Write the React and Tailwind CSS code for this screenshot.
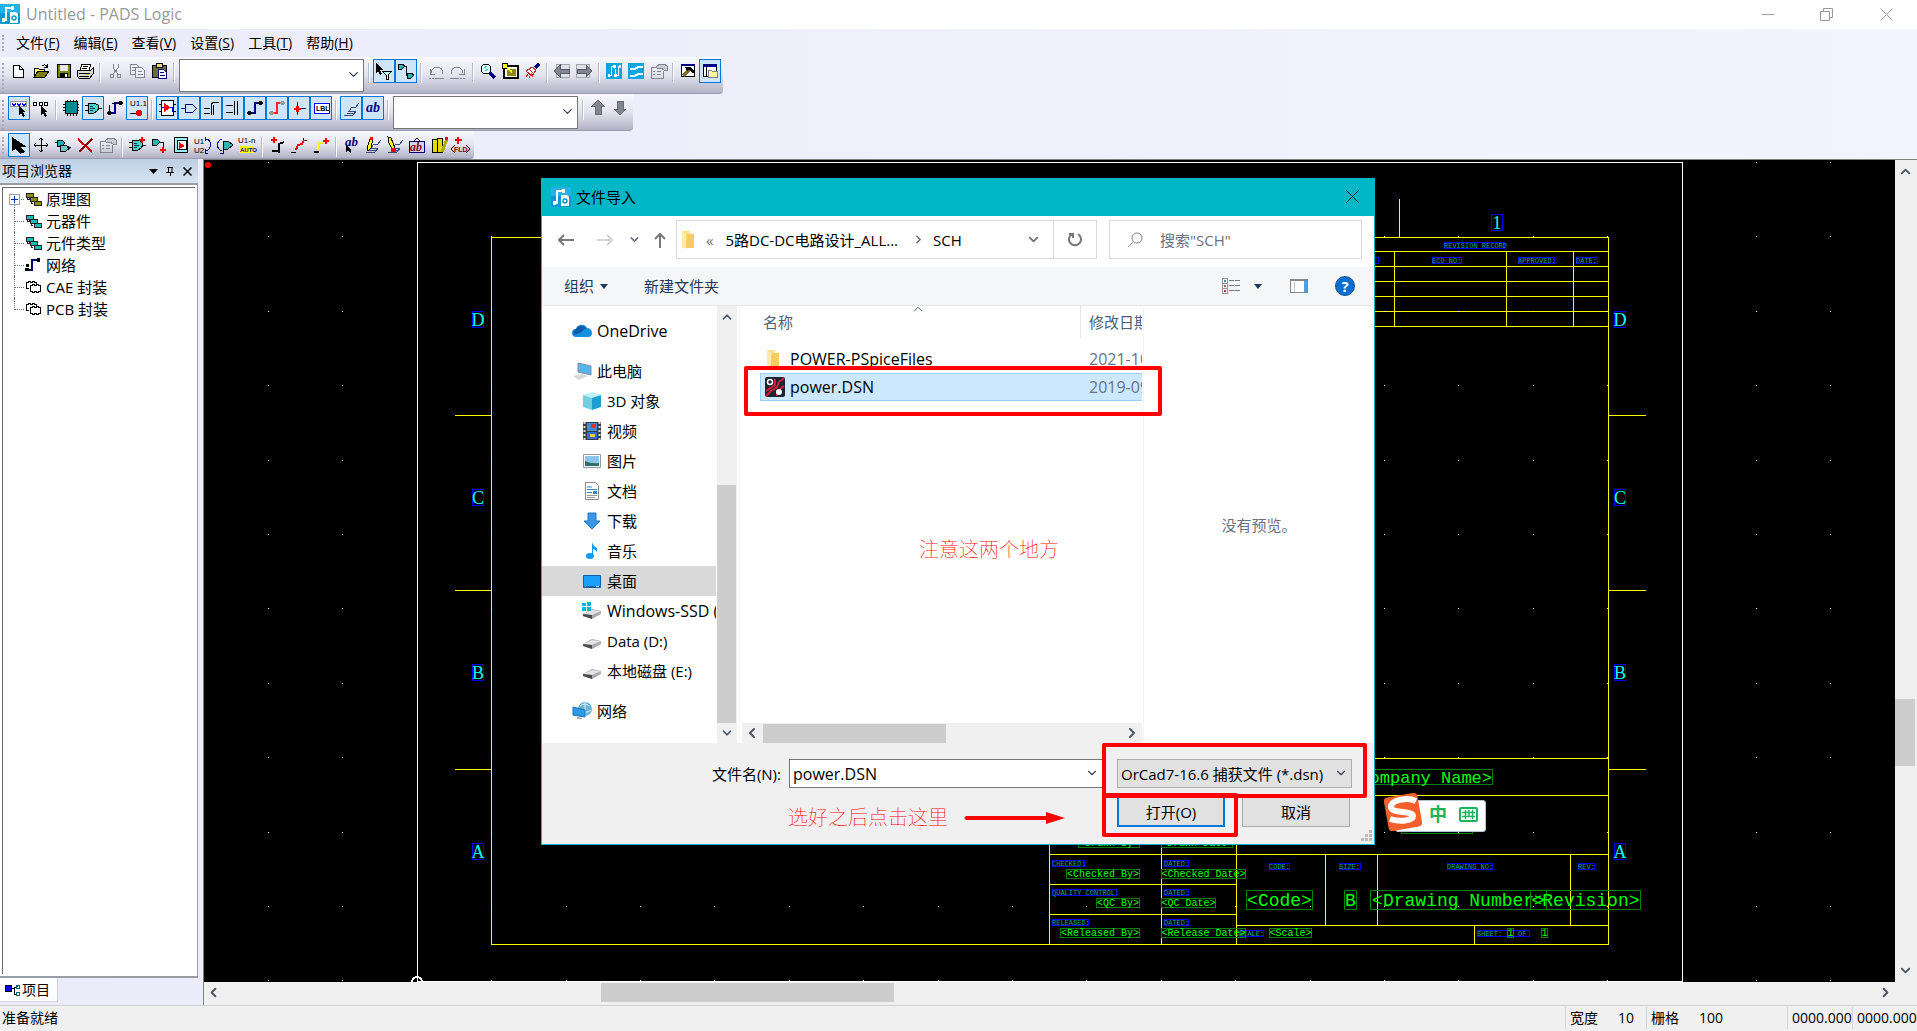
import { ChevronDown, ChevronUp, ChevronLeft, ChevronRight } from "lucide-react";

const K = "#000";
const N = "#000080";
const G = "#808590";

/* ---------- toolbar glyphs, drawn on a 22x24 button ---------- */

const gate = (
  <>
    <path d="M3 9h4M3 14h4M17 12h3" stroke={K} />
    <path d="M6 7h6l4 2 1 3-2 3-3 2H6z" fill="#4fd0d0" stroke={K} />
    <path d="M8 10h3M8 12h5M8 14h3" stroke="#003c3c" />
  </>
);
const cursor = <path d="M11 10v9l2-2 2 4 2-1-2-4h3z" fill={K} />;
const part = (
  <>
    <path d="M5.500 4.500h12v15h-12z" fill="#fff" stroke={K} />
    <path d="M3 8.500h3M3 15.500h3M17 8.500h3M17 15.500h3" stroke={K} />
    <path d="M8 7l7 4.500L8 16z" fill="#f00" />
    <path d="M6 11.500h2M14 11.500h2v4h1" stroke="#00f" />
  </>
);
const plus = (x, y) => <path d={`M${x} ${y - 3}v6M${x - 3} ${y}h6`} stroke="#f00" strokeWidth="2" />;
const net = (c, d) => (
  <>
    <path d="M7 17h4V7h5" stroke={c} strokeWidth="2" />
    <path d="M4 15h3v1h1v2H7v1H4v-1H3v-2h1zM15 5h3v1h1v2h-1v1h-3V8h-1V6h1z" fill={d} />
  </>
);
const props = (
  <>
    <path d="M4 8h9M4 8v11h12v-7" stroke={G} />
    <path d="M6 12h2M10 12h4M6 15h2M10 15h4" stroke={G} />
    <path d="M9 8l4-3h4l3 2v4h-3l-3-2h-4z" fill="#c9ccd4" stroke={G} />
  </>
);
const pencil = <path d="M6 18l-1-3 3-9h3l-2 9z" fill="#ff0" stroke={K} />;
const lines2d = <path d="M4 19h9l3-4H9l3-4h4l3-4M7 17h7" stroke="#39497f" />;

const GLYPHS = {
  new: <path d="M5.500 6.500h6l4 4v8h-10zM11.500 6.500v4h4" fill="#fff" stroke={K} />,
  open: (
    <>
      <path d="M4 18V9h4l1 1h5v3" fill="#ffff9c" stroke={K} />
      <path d="M4 18l4-6h11l-4 6z" fill="#808000" stroke={K} />
      <path d="M12 7c2-2 4-1 5 1M17 5v3h-3" stroke={K} />
    </>
  ),
  save: (
    <>
      <path d="M5.500 5.500h13v13h-13z" fill="#808000" stroke={K} />
      <path d="M8 6h8v6H8z" fill="#e8e8e8" />
      <path d="M8 14h8v5H8z" fill={K} />
      <path d="M13 15h2v3h-2z" fill="#fff" />
    </>
  ),
  print: (
    <>
      <path d="M8 5h9l-2 6H6z" fill="#fff" stroke={K} />
      <path d="M3 11h14l2-2v6l-3 4H5l-2-2z" fill="#d8d8d8" stroke={K} />
      <path d="M9 7h5M8 9h5M5 14h11M5 17h10" stroke={K} />
      <path d="M12 15h3" stroke="#cc0" />
    </>
  ),
  cut: (
    <>
      <path d="M9 5v4l5 6M14 5v4l-5 6" stroke={G} />
      <circle cx="8" cy="17" r="2" stroke={G} />
      <circle cx="15" cy="17" r="2" stroke={G} />
    </>
  ),
  copy: (
    <>
      <path d="M4.500 5.500h6l2 2v8h-8z" fill="#eef" stroke={G} />
      <path d="M9.500 8.500h6l3 3v7h-9z" fill="#eef" stroke={G} />
      <path d="M6 8.500h3M6 11.500h3M12 12.500h4M12 15.500h5" stroke={G} />
    </>
  ),
  paste: (
    <>
      <path d="M4 6h14v12H4z" fill="#6b6b35" stroke={K} />
      <path d="M8 4h6v4H8z" fill="#e8e060" stroke={K} />
      <path d="M10.500 10.500h5l3 3v6h-8z" fill="#fff" stroke={N} />
      <path d="M12 13.500h4M12 16.500h5" stroke={N} />
    </>
  ),
  filter: (
    <>
      <path d="M3 4v10l2-2 2 4 2-1-2-4h3z" fill={K} />
      <path d="M9 12h10l-4 4v4h-2v-4z" fill="#bff" stroke={K} />
    </>
  ),
  trace: (
    <>
      <path d="M3 5h4l3 2-3 3H3zM12 14h4l3 2-3 3h-4z" fill="#2cb5b5" stroke={K} />
      <path d="M10 7h1v9h1" stroke={K} />
    </>
  ),
  undo: <path d="M4 19h2M7 19h2M10 19h9M5 10v5h5M6 14c1-8 12-8 12 1" stroke={G} />,
  redo: <path d="M3 19h9M13 19h2M16 19h2M17 10v5h-5M16 14C15 6 4 6 4 15" stroke={G} />,
  zoom: (
    <>
      <circle cx="9" cy="10" r="5" fill="#e6ffff" stroke={K} />
      <path d="M7 9l3-2M8 12l3-2" stroke="#3cc" />
      <path d="M13 14l5 5" stroke={N} strokeWidth="3" />
    </>
  ),
  board: (
    <>
      <path d="M5 7h14v12H5z" fill="#fff" stroke={K} strokeWidth="2" />
      <path d="M8 10h9v7H8z" fill="#8a8a00" />
      <circle cx="6" cy="7" r="3" fill="#ff0" stroke={K} />
      <path d="M8 9l5 4" stroke="#ff0" strokeWidth="2" />
    </>
  ),
  brush: (
    <>
      <path d="M14 9l4-4" stroke={N} strokeWidth="3" />
      <path d="M5 12l6-4 4 3-4 6z" fill="#fff" stroke="#a33" />
      <path d="M5 18l2-3M8 19l3-5M11 18l2-4M8 10l5 5" stroke="#f22" />
    </>
  ),
  back: (
    <>
      <path d="M5.500 5.500h13v13h-13z" fill="#dfe1e8" stroke="#a0a4b0" />
      <path d="M3 12l6-6v4h9v4H9v4z" fill={G} stroke="#555a66" />
    </>
  ),
  forward: (
    <>
      <path d="M3.500 5.500h13v13h-13z" fill="#dfe1e8" stroke="#a0a4b0" />
      <path d="M19 12l-6-6v4H4v4h9v4z" fill={G} stroke="#555a66" />
    </>
  ),
  layout: (
    <>
      <path d="M3 4h16v16H3z" fill="#0fa5dd" />
      <path d="M5 16.500h3.500v-9H11M12.500 18V9.500M12 16.500h3.500v-9H17" stroke="#fff" />
      <path d="M10 6h3v3h-3zM16 6h2v3h-2zM5 15h2v3H5zM11 15h3v3h-3z" fill="#fff" />
    </>
  ),
  router: (
    <>
      <path d="M3 4h16v16H3z" fill="#0fa5dd" />
      <path d="M5 10h5l3-2h5M5 17h5l3-2h5" stroke="#fff" strokeWidth="2" />
    </>
  ),
  props,
  hammer: (
    <>
      <path d="M4.500 6.500h13v11h-13z" fill="#fff" stroke={K} />
      <path d="M4 5h14v2H4z" fill={N} />
      <path d="M6 17l7-7" stroke="#7a6a30" strokeWidth="3" />
      <path d="M8 8h6l4 5-2 1-4-3-2 1z" fill={K} />
    </>
  ),
  explorer: (
    <>
      <path d="M4.500 6.500h13v11h-13z" fill="#fff" stroke={K} />
      <path d="M4 5h14v3H4z" fill={N} />
      <path d="M7.500 8v10" stroke={K} />
      <path d="M9.500 11.500h3l1 1h5v6h-9z" fill="#fff7a0" stroke={G} />
    </>
  ),
  selectAny: (
    <>
      <path d="M2.500 5.500h16v5h-16z" fill="#fff" stroke="#999" />
      <path d="M4 7l2 3 2-3M9 7l2 3 2-3M14 7l2 3 2-3" stroke="#00f" />
      {cursor}
    </>
  ),
  selectGates: (
    <>
      <path d="M3.500 6.500h3v3h-3zM9.500 6.500h3v3h-3zM14.500 6.500h3v3h-3z" fill="#fff" stroke={K} />
      {cursor}
    </>
  ),
  chip: (
    <>
      <path d="M7.500 4v16M10.500 4v16M13.500 4v16M16.500 4v16M3 8.500h16M3 11.500h16M3 14.500h16" stroke={K} />
      <path d="M5.500 5.500h12v12h-12z" fill="#008c8c" stroke={K} />
    </>
  ),
  gate,
  net: (
    <>
      {net(N, K)}
      <path d="M5.500 9v6M8 7h3" stroke={K} />
    </>
  ),
  pin: (
    <>
      <text x="4" y="10" fontSize="8" fill={K}>U1.1</text>
      <path d="M4 17.500h6" stroke={K} />
      <circle cx="13" cy="17" r="3" fill="#e00" />
    </>
  ),
  part,
  offpage: <path d="M3 12.500h4M7.500 8.500h7l4 4-4 4h-7z" stroke={N} />,
  bus: <path d="M4 12h6M4 17h6M11 19V8l3-2h5M13 19V9" stroke={K} />,
  buspin: <path d="M4 9.500h7M4 16.500h7M12.500 5v14M15.500 5v14" stroke={K} />,
  conn: net(N, K),
  segment: net("#f22", "#999"),
  junction: (
    <>
      <path d="M9.500 6v13M11 12.500h7" stroke={N} />
      <path d="M6 12h7v2H6zM8 10h3v6H8z" fill="#f00" />
    </>
  ),
  label: (
    <>
      <path d="M4 7h15v10H4z" fill="#fff" stroke="#00f" />
      <text x="6" y="15" fontSize="7" fontWeight="bold" fill={K}>LBL</text>
    </>
  ),
  lines: lines2d,
  text: (
    <text x="4" y="16" fontSize="14" fontStyle="italic" fontWeight="bold" fontFamily="Liberation Serif" fill={N}>ab</text>
  ),
  up: <path d="M11 4l6 6h-3v8H8v-8H5z" fill={G} stroke="#666b78" />,
  down: <path d="M11 19l6-6h-3V5H8v8H5z" fill={G} stroke="#666b78" />,
  arrow: <path d="M4 4v14l4-2 4 5 5-2-4-5h6z" fill={K} />,
  move: (
    <path d="M11 6v13M4 12h14M9 7l2-2 2 2M9 17l2 2 2-2M6 10l-2 2 2 2M16 10l2 2-2 2" stroke={K} />
  ),
  gate2: (
    <>
      <path d="M5 7h5l3 3-3 3H5z" fill="#2ab" stroke={K} />
      <path d="M8 12h6l4 3-4 3H8z" fill="#6cc" stroke={K} />
      <path d="M3 9h2M15 14h4" stroke={K} />
    </>
  ),
  del: (
    <>
      <path d="M4 6l14 13" stroke="#c00" strokeWidth="2" />
      <path d="M18 6L5 19" stroke="#800" strokeWidth="2" />
    </>
  ),
  addGate: <>{gate}{plus(16, 7)}</>,
  addConn: (
    <>
      <path d="M4 6h5l3 3-3 3H4z" fill="#2cb5b5" stroke={K} />
      <path d="M11 9h4v6" stroke={K} />
      {plus(15, 17)}
    </>
  ),
  addSheet: (
    <>
      <path d="M4.500 4.500h13v15h-13z" fill="#9ee" stroke={K} />
      <path d="M7.500 7.500h9v9h-9z" fill="#fff" stroke={K} />
      <path d="M9 9l6 4-6 3z" fill="#f00" />
    </>
  ),
  swapRef: (
    <>
      <text x="2" y="11" fontSize="8" fill={K}>U1</text>
      <text x="2" y="20" fontSize="8" fill={K}>U2</text>
      <path d="M14 6c6 1 6 10 0 12M13 4v4M13 16v4h3" stroke={N} />
    </>
  ),
  swapPin: (
    <>
      <path d="M8 6c-6 2-6 10 0 12M9 17v3H6" stroke={N} />
      <path d="M9 8h5l5 4-5 4H9z" fill="#2cb5b5" stroke={K} />
    </>
  ),
  auto: (
    <>
      <text x="2" y="10" fontSize="8" fill={K}>U1-n</text>
      <path d="M3 13h15v7H3z" fill="#ff0" />
      <text x="4" y="19" fontSize="6" fontWeight="bold" fill="#00a">AUTO</text>
    </>
  ),
  addBus: <><path d="M6 18h6M13 20v-9l5-2" stroke={K} strokeWidth="2" />{plus(8, 7)}</>,
  splitBus: (
    <>
      <path d="M3 19h5M15 7h4M15 5v5" stroke={K} />
      <path d="M8 17l2-5 4-1 2-4" stroke="#f00" strokeWidth="2" />
    </>
  ),
  extendBus: (
    <>
      <path d="M4 19h5" stroke={K} strokeWidth="2" />
      <path d="M8 17v-7h6" stroke="#ff0" strokeWidth="2" />
      {plus(16, 8)}
    </>
  ),
  addText: (
    <>
      <text x="5" y="13" fontSize="13" fontStyle="italic" fontWeight="bold" fontFamily="Liberation Serif" fill={N}>ab</text>
      <path d="M6 12v7l2-2 3 4v-5z" fill={K} />
    </>
  ),
  draw: <>{lines2d}{pencil}<path d="M8 4h3v3H8z" fill="#f00" /></>,
  drawMod: (
    <>
      {lines2d}
      <path d="M4 4l3 1 4 10-3 1-3-6z" fill="#ff0" stroke={K} />
      <path d="M7 15h5v4H7z" fill="#e00" />
    </>
  ),
  library: (
    <>
      <path d="M3.500 8.500h15v11h-15z" fill="#cfd6f5" stroke={N} />
      <path d="M7 9l4-4 4 4" stroke={K} />
      <text x="4" y="18" fontSize="12" fontStyle="italic" fontWeight="bold" fontFamily="Liberation Serif" fill="#900">ab</text>
    </>
  ),
  books: (
    <>
      <path d="M4 6h5v13H4zM9 5h5v14H9z" fill="#dd0" stroke={K} />
      <path d="M19 6l-5 13" stroke="#aa0" strokeWidth="3" />
      <path d="M17 4h3v3h-3z" fill="#f00" />
    </>
  ),
  field: (
    <>
      <path d="M8 4v7M5 7h7" stroke="#f00" strokeWidth="2" />
      <path d="M5 12l-4 4 4 4M16 12l4 4-4 4" stroke={K} />
      <text x="4" y="19" fontSize="7" fontWeight="bold" fill="#900">FLD</text>
    </>
  ),
};

function Tool({ name, active }) {
  return (
    <button
      aria-label={name}
      className={`h-6 w-[22px] shrink-0 ${active ? "bg-[#cfe5f7] outline outline-1 -outline-offset-1 outline-[#0078d7]" : ""}`}
    >
      <svg width="22" height="24" viewBox="0 0 22 24" fill="none" shapeRendering="crispEdges" fontFamily="Liberation Sans" aria-hidden="true">
        {GLYPHS[name]}
      </svg>
    </button>
  );
}

function Sep() {
  return <div className="mx-[3px] mt-1 h-5 w-0.5 shrink-0 border-l border-[#b9bac8] bg-white" />;
}

function Combo({ label }) {
  return (
    <div className="relative mx-px">
      <select aria-label={label} className="block h-[33px] w-[185px] appearance-none border border-[#777] bg-white" />
      <ChevronDown size={15} strokeWidth={2} className="absolute right-[3px] top-2 text-gray-700" />
    </div>
  );
}

function Grip() {
  return <div className="mr-1 mt-1 w-1 self-stretch border-r-2 border-dotted border-[#a9abb8]" />;
}

/* "*" marks a pressed button, "|" a separator, "combo" a drop-down */
function Toolbar({ items, label, className }) {
  return (
    <div role="toolbar" aria-label={label}
      className={`flex w-max items-start rounded-br-[4px] border-b border-[#9c9cb0] bg-linear-to-b from-[#f8f8fd] via-[#e3e4ee] to-[#b2b2c6] pr-0.5 pt-0.5 ${className}`}>
      <Grip />
      {items.split(" ").map((item, i) => {
        if (item === "|") return <Sep key={i} />;
        if (item === "combo") return <Combo key={i} label={label} />;
        return <Tool key={i} name={item.replace("*", "")} active={item.endsWith("*")} />;
      })}
    </div>
  );
}

const ROW1 = "new open save print | cut copy paste | combo | filter* trace* | undo redo | zoom board brush | back forward | layout router props | hammer explorer*";
const ROW2 = "selectAny* selectGates | chip gate* net pin* | part* offpage* bus* buspin* conn* segment* junction* label* | lines* text* | combo | up down";
const ROW3 = "arrow* move gate2 del props | addGate addConn addSheet swapRef swapPin auto | addBus splitBus extendBus | addText draw drawMod library books field";

function AppLogo() {
  return (
    <svg width="20" height="20" viewBox="0 0 20 20" fill="none" aria-hidden="true" className="shrink-0">
      <rect width="20" height="20" rx="1" fill="#0d9ad0" />
      <rect width="20" height="9" rx="1" fill="#22b2e6" />
      <path d="M3 16h3V4h5" stroke="#fff" strokeWidth="2" />
      <path d="M2 14h3v4H2zM11 2h3v4h-3z" fill="#fff" />
      <path d="M10 8h6l2 2v9h-8z" fill="#fff" />
      <circle cx="14" cy="14" r="2" stroke="#0d9ad0" strokeWidth="1.5" />
    </svg>
  );
}

function TitleBar() {
  return (
    <header className="flex h-[29px] shrink-0 items-center bg-white pb-px text-[#999]">
      <AppLogo />
      <h1 className="ml-1.5 flex-1 text-base">Untitled - PADS Logic</h1>
      <div className="flex">
        <button aria-label="最小化" className="flex w-[58px] justify-center">
          <svg width="12" height="12" stroke="currentColor"><path d="M0 6.5h12" /></svg>
        </button>
        <button aria-label="还原" className="flex w-[58px] justify-center">
          <svg width="13" height="13" fill="none" stroke="currentColor"><path d="M.5 3.5h9v9h-9zM3.500 3V.5h9v9H10" /></svg>
        </button>
        <button aria-label="关闭" className="flex w-[62px] justify-center">
          <svg width="13" height="13" stroke="currentColor"><path d="M.5.5l12 12M12.500.5l-12 12" /></svg>
        </button>
      </div>
    </header>
  );
}

const MENUS = [["文件", "F"], ["编辑", "E"], ["查看", "V"], ["设置", "S"], ["工具", "T"], ["帮助", "H"]];

function MenuBar() {
  return (
    <nav className="flex h-7 shrink-0 items-center pb-px text-sm text-black">
      <div className="ml-0.5 h-4 w-0.5 border-l-2 border-dotted border-[#a9abb8]" />
      <div className="ml-3 flex gap-3.5">
        {MENUS.map(([t, k]) => (
          <button key={k}>{t}(<u>{k}</u>)</button>
        ))}
      </div>
    </nav>
  );
}

/* ---------- project explorer ---------- */

const stack = (c) => (
  <>
    <path d="M1 2h7v4H1zM5 6h7v4H5zM9 10h7v4H9z" fill={c} stroke="#222" />
    <path d="M2 7v1h2M6 11v1h2M4 6l2 5" stroke="#222" />
  </>
);
const decal = (
  <path d="M4 9H1V3h2V2h2v1h2V2h2v1h2v2M5 6h2V5h2v1h2V5h2v1h2v6h-2v1h-2v-1H9v1H7v-1H5z" fill="#fff" stroke={K} />
);
const TREE = [
  ["原理图", stack("#8c8c00")],
  ["元器件", stack("#10c0b8")],
  ["元件类型", stack("#10c0b8")],
  ["网络", <><path d="M3 13h4V3h6" stroke={N} strokeWidth="2" /><path d="M0 11h4v3H0zM12 1h3v4h-3zM1 7h3v3H1z" fill={K} /></>],
  ["CAE 封装", decal],
  ["PCB 封装", decal],
];

function Explorer() {
  return (
    <aside className="mr-[5px] flex w-[198px] shrink-0 flex-col">
      <div className="flex h-6 items-center justify-between bg-linear-to-b from-[#bccfe4] to-[#d8e4f0] pl-0.5 pr-1.5 text-sm">
        <h2>项目浏览器</h2>
        <div className="flex items-center gap-2">
          <button aria-label="菜单"><svg width="9" height="5"><path d="M0 0h9L4.500 5z" /></svg></button>
          <button aria-label="固定">
            <svg width="9" height="9" fill="none" stroke="#000"><path d="M2.500 0v5M1 .5h6M6 0v5M0 5.500h8M4.500 6v3" /></svg>
          </button>
          <button aria-label="关闭">
            <svg width="9" height="9" stroke="#000" strokeWidth="1.500"><path d="M.5.5l8 8M8.500.5l-8 8" /></svg>
          </button>
        </div>
      </div>
      <div className="flex-1 border-y-2 border-r border-[#9a9ca6] bg-white p-0.5">
        <ul className="h-full border-l border-t border-[#696969] text-[15px]">
          {TREE.map(([name, glyph], i) => (
            <li key={name} className="relative flex h-[22px] items-center whitespace-nowrap pl-[22px]">
              <span className={`absolute left-[11px] w-0 border-l border-dotted border-gray-500 ${i === 0 ? "bottom-0 top-3" : i === 5 ? "bottom-2.5 top-0" : "bottom-0 top-0"}`} />
              <span className="absolute left-[11px] top-[11px] w-2.5 border-t border-dotted border-gray-500" />
              {i === 0 && (
                <span className="absolute left-1.5 top-1.5 flex size-[11px] items-center justify-center border border-gray-400 bg-white">
                  <svg width="7" height="7" stroke="#039"><path d="M0 3.500h7M3.500 0v7" /></svg>
                </span>
              )}
              <svg width="17" height="17" viewBox="0 0 17 17" fill="none" shapeRendering="crispEdges" aria-hidden="true">{glyph}</svg>
              <span className="ml-1">{name}</span>
            </li>
          ))}
        </ul>
      </div>
      <div className="h-[27px]">
        <button className="flex h-6 w-[58px] items-center border-b border-r border-gray-300 bg-white pl-1 text-sm">
          <svg width="16" height="14" fill="none" shapeRendering="crispEdges">
            <path d="M1 2h6v6H1z" fill="#00f" stroke={K} />
            <path d="M7 5h3v6h3M10 5l4-2" stroke={K} />
            <path d="M12 2h3v3h-3zM12 9h3v3h-3z" stroke="#066" />
          </svg>
          <span className="ml-0.5">项目</span>
        </button>
      </div>
    </aside>
  );
}

/* ---------- schematic sheet, in sheet coordinates ---------- */

const DOTS = [];
for (let c = 0; c < 22; c++) {
  for (let r = 0; r < 12; r++) DOTS.push([Math.round(268 + c * 74.4), Math.round(162 + r * 74.4)]);
}

// x, y, width, text
const TAGS = [
  [1444, 242, 61, "REVISION RECORD"], [1360, 257, 19, "LTR:"], [1432, 257, 30, "ECO NO:"],
  [1518, 257, 37, "APPROVED:"], [1576, 257, 22, "DATE:"],
  [1052, 860, 33, "CHECKED:"], [1164, 860, 25, "DATED:"],
  [1052, 889, 65, "QUALITY CONTROL:"], [1164, 889, 25, "DATED:"],
  [1052, 919, 37, "RELEASED:"], [1164, 919, 25, "DATED:"],
  [1269, 863, 21, "CODE:"], [1339, 863, 22, "SIZE:"], [1447, 863, 46, "DRAWING NO:"], [1578, 863, 17, "REV:"],
  [1239, 930, 25, "SCALE:"], [1477, 930, 53, "SHEET:"],
];
const FIELDS = [
  [1078, 838, 62, "<Drawn By>"], [1161, 838, 72, "<Drawn Date>"],
  [1066, 869, 74, "<Checked By>"], [1161, 869, 85, "<Checked Date>"],
  [1096, 898, 44, "<QC By>"], [1161, 898, 55, "<QC Date>"],
  [1060, 928, 80, "<Released By>"], [1161, 928, 85, "<Release Date>"],
  [1269, 928, 43, "<Scale>"], [1507, 928, 7, "1"], [1541, 928, 7, "1"],
];
const BIG = [
  [1246, 67, "<Code>"], [1344, 13, "B"], [1370, 177, "<Drawing Number>"], [1530, 111, "<Revision>"],
];
const ZONES = [["D", 311], ["C", 489], ["B", 664], ["A", 843]];

function Zone({ x, y, children }) {
  return (
    <g>
      <rect x={x + 0.5} y={y + 0.5} width="11" height="16" fill="none" stroke="#00f" />
      <text x={x + 6} y={y + 15} fontSize="18" fontFamily="'Liberation Serif', serif" textAnchor="middle" fill="#0ff">{children}</text>
    </g>
  );
}

function Sheet() {
  return (
    <svg width="1691" height="822" viewBox="204 160 1691 822" fill="none" fontFamily="'Liberation Mono', monospace" className="absolute left-0 top-0">
      <g shapeRendering="crispEdges">
        <path d="M417.500 981V162.500H1682.500V981.500H417" stroke="#fff" />
        <circle cx="417" cy="982" r="5" stroke="#fff" strokeWidth="2" />
        <path
          d="M491.500 237.500H1608.500V944.500H491.500zM455 415.500h36M455 590.500h36M455 769.500h36M1608 415.500h38M1608 590.500h38M1608 769.500h38M1399.500 199v38
             M1300 251.500h308M1300 266.500h308M1300 281.500h308M1300 296.500h308M1300 311.500h308M1300 326.500h308M1394.500 251v75M1506.500 251v75M1573.500 251v75
             M1049 758.500h559M1049 795.500h559M1049 854.500h559M1049 884.500h187M1049 914.500h187M1236 925.500h372
             M1049.500 758v186M1161.500 795v149M1236.500 795v149M1325.500 854v71M1377.500 854v71M1570.500 854v71M1474.500 925v19"
          stroke="#ff0"
        />
      </g>
      {DOTS.map(([x, y]) => <rect key={`${x}-${y}`} x={x} y={y} width="1" height="1" fill="#fff" />)}
      <circle cx="208" cy="165" r="3" fill="#f00" />

      {TAGS.map(([x, y, w, t]) => (
        <g key={`${x}-${y}`}>
          <rect x={x + 0.5} y={y + 0.5} width={w - 1} height="6" stroke="#00f" />
          <text x={x} y={y + 6} fontSize="7" fill="#00a0a0">{t}</text>
        </g>
      ))}
      <text x="1518" y="936" fontSize="7" fill="#00a0a0">OF</text>
      {FIELDS.map(([x, y, w, t]) => (
        <g key={`${x}-${y}`}>
          <rect x={x + 0.5} y={y + 0.5} width={w - 1} height="9" stroke="#008000" />
          <text x={x + w / 2} y={y + 8} fontSize="10" textAnchor="middle" fill="#0f0">{t}</text>
        </g>
      ))}
      {BIG.map(([x, w, t]) => (
        <g key={x}>
          <rect x={x + 0.5} y="890.500" width={w - 1} height="19" stroke="#008000" />
          <text x={x + w / 2} y="906" fontSize="18" textAnchor="middle" fill="#0f0">{t}</text>
        </g>
      ))}
      <rect x="1352.500" y="769.500" width="140" height="15" stroke="#008000" />
      <text x="1492" y="783" fontSize="17" textAnchor="end" fill="#0f0">&lt;Company Name&gt;</text>
      <rect x="1401.500" y="817.500" width="71" height="16" stroke="#008000" />

      {ZONES.map(([t, y]) => <Zone key={t} x={472} y={y}>{t}</Zone>)}
      {ZONES.map(([t, y]) => <Zone key={t} x={1614} y={y}>{t}</Zone>)}
      <Zone x={1491} y={214}>1</Zone>
    </svg>
  );
}

function ImeBar() {
  return (
    <div className="absolute left-[1179px] top-[634px] flex h-9 w-[103px] items-center">
      <div className="absolute bottom-0 left-3 right-0 top-1.5 mb-[-2px] rounded-[3px] border border-[#b9c4d2] bg-white" />
      <svg width="40" height="40" viewBox="0 0 40 40" className="relative shrink-0" aria-hidden="true">
        <rect x="3" y="3" width="34" height="34" rx="4" fill="#f4602b" transform="rotate(-10 20 20)" />
        <path d="M33 9C24 5 8 8 8 15c0 7 22 3 22 9 0 5-13 6-23 3" fill="none" stroke="#fff" strokeWidth="6" />
      </svg>
      <span className="relative ml-1.5 mt-1 text-lg font-bold leading-5 text-[#1db35a]">中</span>
      <svg width="19" height="16" viewBox="0 0 19 16" className="relative ml-3 mt-1.5" fill="none" stroke="#1db35a" aria-hidden="true">
        <rect x="1" y="1" width="17" height="13" rx="1" strokeWidth="2" />
        <path d="M3 5.500h13M3 9.500h13M6.500 3v9M10 3v7M13.500 3v9" strokeWidth="1.500" />
      </svg>
    </div>
  );
}

/* ---------- file dialog ---------- */

const folder = (
  <svg width="20" height="20" viewBox="0 0 20 20" aria-hidden="true">
    <path d="M2 1h8v17H2z" fill="#ffe08a" />
    <path d="M7 4h7v14H5z" fill="#f5cd63" />
    <path d="M2 1l4 3v15l-4-2z" fill="#fdeab0" />
  </svg>
);
const dsn = (
  <svg width="20" height="20" viewBox="0 0 20 20" fill="none" aria-hidden="true">
    <rect width="20" height="20" rx="2" fill="#1b2433" />
    <path d="M1 14l9-6V2M1 19l5-5 6-4 2-5 5-4M12 19v-5l7-5" stroke="#d81e3a" strokeWidth="2" />
    <circle cx="5" cy="5" r="2.500" stroke="#fff" strokeWidth="1.500" />
    <circle cx="14" cy="15" r="3" fill="#fff" />
  </svg>
);
const drive = (
  <>
    <path d="M1 13l9-5 9 2v3l-9 5-9-3z" fill="#a9abad" />
    <path d="M1 13l9-4 9 1-9 4z" fill="#e2e4e6" />
    <path d="M1 13l9 1v4l-9-3z" fill="#4a4d50" />
  </>
);
const PLACES = [
  ["OneDrive", 0, <><path d="M4 16a4 4 0 010-8 6 6 0 0111-1 5 5 0 015 5q0 4-4 4z" fill="#1490df" /><path d="M4 8a6 6 0 0110-1l-6 5-6 2q-2-5 2-6z" fill="#0a5cad" /></>, "mt-2.5 text-base"],
  ["此电脑", 0, <><path d="M6 2l13 3v9L6 11z" fill="#5ab4ec" stroke="#88a" /><path d="M1 15l9-2 6 2-9 4z" fill="#d5dade" /></>, "mt-2.5"],
  ["3D 对象", 1, <><path d="M10 1l9 3-9 3-9-3z" fill="#bff0f5" /><path d="M1 4l9 3v12l-9-3z" fill="#6fd0e0" /><path d="M10 7l9-3v12l-9 3z" fill="#1f9fd0" /></>],
  ["视频", 1, <><path d="M1 1h18v18H1z" fill="#3a3d42" /><path d="M5 2h10v8H5z" fill="#3f8de0" /><path d="M5 11h10v7H5z" fill="#2f6fd0" /><path d="M9 3h5v4H9z" fill="#d33" /><path d="M8 13h5v3H8z" fill="#ec3" /><path d="M2.500 1v18M17.500 1v18" stroke="#ddd" strokeWidth="2" strokeDasharray="2 2" /></>],
  ["图片", 1, <><path d="M1.500 3.500h17v13h-17z" fill="#fff" stroke="#999" /><path d="M3 5h14v10H3z" fill="#8cc4f0" /><path d="M3 10q6 3 14 2v3H3z" fill="#2b6f6a" /></>],
  ["文档", 1, <><path d="M3.500 1.500h10l3 3v14h-13z" fill="#fff" stroke="#888" /><path d="M5 6h5M5 8.500h10M5 11.500h5" stroke="#28c" /><path d="M5 14.500h10M5 16.500h8" stroke="#999" /><path d="M11 10h4v3h-4z" fill="#28c" /></>],
  ["下载", 1, <path d="M6 2h8v8h4l-8 8-8-8h4z" fill="#3a96e4" stroke="#2277c0" />],
  ["音乐", 1, <><path d="M10 15V1q1 4 5 6v4q-2-3-4-3v7z" fill="#0a9bf5" /><ellipse cx="8" cy="15" rx="4" ry="3" fill="#0a9bf5" /></>],
  ["桌面", 1, <><path d="M1.500 4.500h17v12h-17z" fill="#18a0fb" stroke="#0b63ad" /><path d="M2 15.500h16" stroke="#0b63ad" /><path d="M3 15.500h1M14 15.500h3" stroke="#fff" /></>],
  ["Windows-SSD (C:)", 1, <>{drive}<path d="M0 2h4v3H0zM5 1h4v4H5zM0 6h4v4H0zM5 6h4v4H5z" fill="#00b4e6" /></>, "text-base"],
  ["Data (D:)", 1, drive],
  ["本地磁盘 (E:)", 1, drive],
  ["网络", 0, <><circle cx="13" cy="8" r="7" fill="#6bb4d6" /><path d="M8 5q5-4 9 0M8 10q6 3 11-1M13 1v14" stroke="#d5eef8" fill="none" /><path d="M1 6l12 3v7L1 14z" fill="#2b9be8" stroke="#1a6eb0" /><path d="M5 16l5 1v1H5z" fill="#9ab" /></>, "mt-2.5"],
];

function DialogNav() {
  return (
    <ul className="w-[174px] overflow-hidden">
      {PLACES.map(([name, level, glyph, extra]) => (
        <li key={name} className={extra}>
          <button className={`flex h-[30px] w-full items-center gap-[5px] whitespace-nowrap ${level ? "pl-10" : "pl-[30px]"} ${name === "桌面" ? "bg-[#d9d9d9]" : ""}`}>
            <svg width="20" height="20" viewBox="0 0 20 20" fill="none" className="shrink-0" aria-hidden="true">{glyph}</svg>
            {name}
          </button>
        </li>
      ))}
    </ul>
  );
}

function FileTable() {
  return (
    <div className="flex w-[403px] flex-col justify-between overflow-hidden">
      <div className="relative ml-5 w-[382px] overflow-hidden">
        <ChevronUp size={14} strokeWidth={1.500} className="absolute left-[151px] top-[-4px] text-gray-700" />
        <table className="w-[440px] table-fixed whitespace-nowrap text-left">
          <colgroup>
            <col className="w-[321px]" />
            <col />
          </colgroup>
          <thead>
            <tr className="h-[39px] align-top text-[#4c607a]">
              <th className="p-0 font-normal"><div className="h-8 border-r border-gray-200 pl-[3px] leading-8">名称</div></th>
              <th className="p-0 pl-2 font-normal leading-8">修改日期</th>
            </tr>
          </thead>
          <tbody className="text-base leading-5">
            <tr className="h-7">
              <td className="p-0"><div className="flex items-center gap-1 pl-[5px]">{folder}<span className="ml-px">POWER-PSpiceFiles</span></div></td>
              <td className="p-0 pl-2 text-gray-500">2021-10-12</td>
            </tr>
            <tr className="h-7 bg-[#cce8ff] outline outline-1 -outline-offset-1 outline-[#99d1ff]">
              <td className="p-0"><div className="flex items-center gap-1 pl-[5px]">{dsn}<span className="ml-px">power.DSN</span></div></td>
              <td className="p-0 pl-2 text-gray-500">2019-09-20</td>
            </tr>
          </tbody>
        </table>
      </div>
      <div className="ml-0.5 mr-px flex h-5 items-center bg-[#f0f0f0] text-gray-600">
        <ChevronLeft size={16} strokeWidth={3} className="ml-0.5 mr-[3px]" />
        <div className="h-[19px] w-[183px] bg-[#cdcdcd]" />
        <ChevronRight size={16} strokeWidth={3} className="ml-auto mr-0.5" />
      </div>
    </div>
  );
}

function ImportDialog() {
  return (
    <section role="dialog" aria-label="文件导入"
      className="absolute left-[337px] top-[18px] flex h-[667px] w-[834px] flex-col border border-[#00b7c7] bg-white text-[15px] leading-5">
      <div className="flex h-[37px] items-center bg-[#00b7c7] pb-0.5 pl-[9px] pr-[15px]">
        <AppLogo />
        <h2 className="ml-[5px] flex-1">文件导入</h2>
        <button aria-label="关闭"><svg width="13" height="13" stroke="#000"><path d="M.5.5l12 12M12.500.5l-12 12" /></svg></button>
      </div>

      <div className="flex h-[51px] items-center pb-1 pr-3 text-gray-500">
        <button aria-label="后退" className="ml-4">
          <svg width="16" height="12" fill="none" stroke="#777" strokeWidth="2"><path d="M1 6h15M6 1L1 6l5 5" /></svg>
        </button>
        <button aria-label="前进" className="ml-[23px]">
          <svg width="16" height="12" fill="none" stroke="#d4d4d4" strokeWidth="2"><path d="M0 6h15M10 1l5 5-5 5" /></svg>
        </button>
        <ChevronDown size={13} strokeWidth={3} className="ml-[15px]" />
        <button aria-label="向上" className="ml-3">
          <svg width="14" height="16" fill="none" stroke="#777" strokeWidth="2"><path d="M7 16V2M2 7l5-5 5 5" /></svg>
        </button>
        <div className="ml-[9px] flex h-[39px] flex-1 items-center border border-[#d9d9d9] pl-[3px] text-black">
          {folder}
          <span className="ml-1.5 text-gray-500">«</span>
          <span className="ml-3">5路DC-DC电路设计_ALL...</span>
          <ChevronRight size={13} strokeWidth={3} className="ml-3.5 text-gray-500" />
          <span className="ml-2">SCH</span>
          <ChevronDown size={15} strokeWidth={3} className="ml-auto mr-3 text-gray-500" />
          <button aria-label="刷新" className="flex h-full w-[43px] items-center justify-center border-l border-[#d9d9d9]">
            <svg width="15" height="15" viewBox="0 0 15 15" fill="none" stroke="#777" strokeWidth="2"><path d="M10 2a6 6 0 11-6 0M5 6V2H1" /></svg>
          </button>
        </div>
        <label className="ml-3 flex h-[39px] w-[253px] items-center border border-[#d9d9d9] pl-[17px]">
          <svg width="16" height="16" fill="none" stroke="#888" aria-hidden="true"><circle cx="10" cy="6" r="5" /><path d="M6.500 9.500L1 15" /></svg>
          <input aria-label="搜索" placeholder={'搜索"SCH"'} className="ml-[17px] w-40 outline-none placeholder:text-gray-500" />
        </label>
      </div>

      <div className="flex h-[39px] items-center border-b border-[#e6e7e9] bg-[#f5f6f7] pl-[22px] pr-[19px] text-[#1e395b]">
        <button className="flex items-center gap-1.5">组织<svg width="8" height="5" fill="currentColor"><path d="M0 0h8L4 5z" /></svg></button>
        <button className="ml-9 mr-auto">新建文件夹</button>
        <button aria-label="视图" className="flex items-center gap-3.5">
          <svg width="18" height="16" fill="none" shapeRendering="crispEdges">
            <path d="M.5.5h5v15h-5zM1 5.500h4M1 10.500h4" stroke="#999" />
            <path d="M7 2.500h5M13 2.500h5M7 7.500h5M13 7.500h5M7 12.500h5M13 12.500h5" stroke="#777" />
            <path d="M2 2h2v2H2z" fill="#48a" /><path d="M2 7h2v2H2z" fill="#a65" /><path d="M2 12h2v2H2z" fill="#d22" />
          </svg>
          <svg width="8" height="5" fill="currentColor"><path d="M0 0h8L4 5z" /></svg>
        </button>
        <button aria-label="预览窗格" className="ml-7">
          <svg width="18" height="15" fill="none" shapeRendering="crispEdges">
            <path d="M.5.5h17v13H.5z" fill="#fff" stroke="#888" /><path d="M0 0h18v2H0z" fill="#888" /><path d="M4.500 3v10" stroke="#ccc" /><path d="M14 2h3v11h-3z" fill="#4b9fe0" />
          </svg>
        </button>
        <button aria-label="帮助" className="ml-[27px] flex size-5 items-center justify-center rounded-full border border-[#114f95] bg-[#0b6ed0] font-bold text-white">?</button>
      </div>

      <div className="flex min-h-0 flex-1">
        <DialogNav />
        <div className="ml-px flex w-5 flex-col items-center bg-[#f0f0f0] text-gray-600">
          <ChevronUp size={14} strokeWidth={3} className="mt-1" />
          <div className="mt-auto h-[238px] w-[19px] self-start bg-[#cdcdcd]" />
          <ChevronDown size={14} strokeWidth={3} className="my-[3px]" />
        </div>
        <div className="ml-0.5 border-l border-gray-100" />
        <FileTable />
        <div className="flex flex-1 items-center justify-center border-l border-gray-100 text-gray-500">
          <p className="whitespace-nowrap">没有预览。</p>
        </div>
      </div>

      <div className="h-[101px] bg-[#f0f0f0] pt-4">
        <div className="flex items-center pr-[22px]">
          <label htmlFor="filename" className="w-[239px] text-right">文件名(N):</label>
          <div className="relative ml-2 flex-1">
            <input id="filename" defaultValue="power.DSN" className="block h-[29px] w-full border border-[#777] bg-white pl-[3px] text-base" />
            <ChevronDown size={14} strokeWidth={2} className="absolute right-1 top-[7px] text-gray-700" />
          </div>
          <div className="relative ml-3.5">
            <select aria-label="文件类型" className="block h-[29px] w-[235px] appearance-none border border-[#adadad] bg-[#e1e1e1] pl-[3px]">
              <option>OrCad7-16.6 捕获文件 (*.dsn)</option>
            </select>
            <ChevronDown size={14} strokeWidth={2} className="absolute right-1 top-[7px] text-gray-700" />
          </div>
        </div>
        <div className="mt-2 flex justify-end gap-[17px] pr-6">
          <button className="h-[31px] w-[108px] border-2 border-[#0078d7] bg-[#e1e1e1]">打开(O)</button>
          <button className="h-[31px] w-[108px] border border-[#adadad] bg-[#e1e1e1]">取消</button>
        </div>
      </div>
      <svg width="12" height="12" fill="#bbb" className="absolute bottom-0.5 right-0.5" aria-hidden="true">
        <path d="M9 0h3v3H9zM9 4h3v3H9zM9 8h3v3H9zM5 4h3v3H5zM5 8h3v3H5zM1 8h3v3H1z" />
      </svg>

      {/* notes on top of the dialog */}
      <div className="absolute left-[202px] top-[187px] h-[50px] w-[418px] rounded-[2px] border-4 border-[#f00]" />
      <div className="absolute left-[560px] top-[564px] h-[55px] w-[265px] rounded-[2px] border-4 border-[#f00]" />
      <div className="absolute left-[560px] top-[614px] h-11 w-[136px] rounded-[2px] border-4 border-[#f00]" />
      <p className="absolute left-[377px] top-[359px] whitespace-nowrap text-xl font-thin leading-6 text-[#f00]">注意这两个地方</p>
      <p className="absolute left-[246px] top-[627px] whitespace-nowrap text-xl font-thin leading-6 text-[#f00]">选好之后点击这里</p>
      <svg width="101" height="14" className="absolute left-[422px] top-[632px]" fill="#f00" aria-hidden="true">
        <path d="M2 5h80V1l19 6-19 6V9H2q-3-2 0-4z" />
      </svg>
    </section>
  );
}

export default function App() {
  return (
    <div className="flex h-screen flex-col overflow-hidden bg-linear-to-r from-[#ebebfa] to-[#f2f5fd] font-['Open_Sans','Noto_Sans_CJK_SC',sans-serif] text-black">
      <TitleBar />
      <MenuBar />
      <Toolbar items={ROW1} label="标准工具栏" className="h-[37px]" />
      <Toolbar items={ROW2} label="选择筛选工具栏" className="h-[37px]" />
      <Toolbar items={ROW3} label="原理图编辑工具栏" className="h-7" />

      <main className="flex min-h-0 flex-1">
        <Explorer />
        <div className="flex min-w-0 flex-1 flex-col border-l border-t border-[#808080]">
          <div className="flex min-h-0 flex-1">
            <div className="relative flex-1 overflow-hidden bg-black">
              <Sheet />
              <ImeBar />
              <ImportDialog />
            </div>
            <div className="flex w-[22px] flex-col items-center bg-[#f0f0f0] pr-0.5 text-gray-600">
              <ChevronUp size={15} strokeWidth={3} className="mt-1" />
              <div className="mt-[520px] h-[67px] w-full bg-[#cdcdcd]" />
              <ChevronDown size={15} strokeWidth={3} className="mb-1 mt-auto" />
            </div>
          </div>
          <div className="flex h-[23px] items-center bg-[#f0f0f0] pb-0.5 text-gray-600">
            <ChevronLeft size={15} strokeWidth={3} className="ml-0.5" />
            <div className="ml-[380px] h-[19px] w-[293px] bg-[#cdcdcd]" />
            <ChevronRight size={15} strokeWidth={3} className="ml-auto mr-6" />
          </div>
        </div>
      </main>

      <footer className="flex h-[26px] shrink-0 items-center border-t border-[#d0d0d0] bg-[#f0f0f0] pb-0.5 text-sm">
        <span className="flex-1 pl-0.5">准备就绪</span>
        <span className="flex h-[22px] w-[81px] items-center gap-5 border-l border-gray-300 pl-1">宽度<span>10</span></span>
        <span className="flex h-[22px] w-[141px] items-center gap-5 border-l border-gray-300 pl-1">栅格<span>100</span></span>
        <span className="flex h-[22px] w-[65px] items-center border-l border-gray-300 pl-1">0000.000</span>
        <span className="flex h-[22px] w-[65px] items-center border-l border-gray-300 pl-1">0000.000</span>
      </footer>
    </div>
  );
}
